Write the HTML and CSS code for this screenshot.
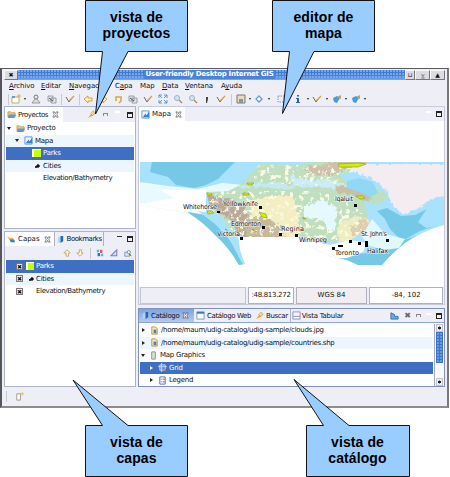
FILE: index.html
```html
<!DOCTYPE html>
<html lang="es">
<head>
<meta charset="utf-8">
<title>User-friendly Desktop Internet GIS</title>
<link rel="stylesheet" href="styles.css">
</head>
<body>
<svg class="defs" width="0" height="0">
  <symbol id="folder" viewBox="0 0 10 10"><path d="M1 2h3l1 1h4v5H1z" fill="#f4c869" stroke="#b08a40" stroke-width=".7"/><path d="M2 5h8L8 9H1z" fill="#5f96de"/></symbol>
  <symbol id="mapicon" viewBox="0 0 10 10"><path d="M1 1h8v8H1z" fill="#e8f3ff" stroke="#5e93cf"/><path d="M2 8l3-4 1 2 3-4v6z" fill="#3c80d0"/></symbol>
  <symbol id="layers" viewBox="0 0 10 10"><path d="M0 1l3 2h4v3H3z" fill="#efb642"/><path d="M3 5h5l1 3H4z" fill="#3d7ec9"/></symbol>
  <symbol id="book" viewBox="0 0 10 10"><path d="M2 3l3-2v7l-3 1z" fill="#b6d4f5"/><path d="M5 1h3v6L5 9z" fill="#2667b9"/></symbol>
  <symbol id="file" viewBox="0 0 10 10"><path d="M2 1h4l2 2v6H2z" fill="#fbe8b5" stroke="#bd8d3b"/><path d="M4 4h3v4H4z" fill="#477fc0"/></symbol>
  <symbol id="close" viewBox="0 0 8 8"><path d="M1 1h2l1 2 1-2h2L5.500 4 7 7H5L4 5 3 7H1l1.500-3z" fill="#fff" stroke="#444" stroke-width=".7"/></symbol>
  <symbol id="win" viewBox="0 0 10 10"><path d="M1 1h8v8H1z" fill="#fff" stroke="#6d95c4"/><path d="M1 1h8v2H1z" fill="#3478c9"/></symbol>
  <symbol id="table" viewBox="0 0 10 10"><path d="M1 1h8v8H1z" fill="#f4f4fb" stroke="#8a93b5"/><path d="M1 6h8" stroke="#8a93b5"/></symbol>
  <symbol id="newwin" viewBox="0 0 10 10"><path d="M1 3h7v6H1z" fill="#fff" stroke="#c2ad6c"/><path d="M1 3h3" stroke="#4d84c4" stroke-width="1.500"/><path d="M8 0v4M6 2h4" stroke="#e5b03d"/></symbol>
  <symbol id="torch" viewBox="0 0 10 10"><path d="M1 9l4-5 2 2z" fill="#e7a637"/><path d="M4 4l3-3 2 3-3 2z" fill="#f8d785" stroke="#a98a50" stroke-width=".6"/></symbol>
  <symbol id="zoomi" viewBox="0 0 10 10"><circle cx="4" cy="4" r="2.500" fill="#cfe6f7" stroke="#9fb1c6"/><path d="M6 6l3 3" stroke="#b68c52" stroke-width="1.400"/></symbol>
  <symbol id="arrow" viewBox="0 0 10 10"><path d="M1 5l4-3v2h4v3H5v2z" fill="#fff0b7" stroke="#d39b31" stroke-width=".9"/></symbol>
  <symbol id="pen" viewBox="0 0 10 10"><path d="M1 3l3 5 3-4" fill="none" stroke="#667"/><path d="M4 7l5-5" stroke="#d4a043" stroke-width="1.300"/></symbol>
  <symbol id="brush" viewBox="0 0 10 10"><path d="M1 4l4-2 3 2-3 5-3-1z" fill="#4b9bd7"/><path d="M5 3l4-2v4z" fill="#b9a264"/></symbol>
  <symbol id="disk" viewBox="0 0 10 10"><path d="M1 1h8v8H1z" fill="#e6dac8" stroke="#817764"/><path d="M3 5h4v4H3z" fill="#8794a6"/></symbol>
  <symbol id="paste" viewBox="0 0 10 10"><path d="M1 2h5v5H1zM4 4h5v5H4z" fill="#e2e5ea" stroke="#8b8f98" stroke-width=".8"/><path d="M2 4l4 3" stroke="#557"/></symbol>
  <symbol id="user" viewBox="0 0 10 10"><circle cx="5" cy="3" r="2" fill="#eee" stroke="#777"/><path d="M1 9l3-4h2l3 4z" fill="#ddd" stroke="#888" stroke-width=".8"/></symbol>
</svg>

<div class="window">
  <div class="titlebar">
    <span class="wbtn left">✖</span>
    <div class="caption"><span>User-friendly Desktop Internet GIS</span></div>
    <span class="wbtn">⊔</span><span class="wbtn wide">⩣</span><span class="wbtn wide">▲</span>
  </div>
  <nav class="menu">
    <span class="m1"><u>A</u>rchivo</span><span class="m2"><u>E</u>ditar</span><span class="m3"><u>N</u>avegación</span><span class="m4">C<u>a</u>pa</span><span class="m5">Map</span><span class="m6"><u>D</u>ata</span><span class="m7"><u>V</u>entana</span><span class="m8">A<u>y</u>uda</span>
  </nav>
  <div class="toolbar">
    <i class="sep"></i>
    <svg><use href="#newwin"/></svg><b class="dd"></b>
    <svg><use href="#user"/></svg>
    <svg><use href="#paste"/></svg>
    <i class="sep"></i>
    <svg><use href="#pen"/></svg>
    <i class="sep"></i>
    <svg><use href="#arrow"/></svg>
    <svg class="flip"><use href="#arrow"/></svg>
    <svg viewBox="0 0 10 10"><path d="M2 7V3h5v4l-2 2" fill="none" stroke="#d8a83e" stroke-width="1.600"/></svg>
    <svg><use href="#paste"/></svg>
    <svg><use href="#pen"/></svg>
    <svg viewBox="0 0 10 10"><path d="M1 1l3 3M9 1L6 4M1 9l3-3M9 9L6 6M1 4V1h3M6 1h3v3M1 6v3h3M9 6v3H6" fill="none" stroke="#4d8dcb" stroke-width=".9"/></svg>
    <svg><use href="#zoomi"/></svg>
    <svg><use href="#zoomi"/></svg>
    <svg viewBox="0 0 10 10"><path d="M4 3h2v2l-1 4H4V6z" fill="#444"/></svg>
    <svg><use href="#pen"/></svg>
    <i class="sep"></i>
    <svg><use href="#disk"/></svg><b class="dd"></b>
    <svg viewBox="0 0 10 10"><path d="M5 2l3 3-3 3-3-3z" fill="#fff" stroke="#659ed6" stroke-width="1.300"/></svg><b class="dd"></b>
    <svg viewBox="0 0 10 10"><path d="M2 2h6v6H2z" fill="none" stroke="#7e98b5" stroke-dasharray="1.500 1"/></svg>
    <svg viewBox="0 0 10 10"><path d="M4 1h2v1.500H4zM3 4h3v4h1v1H3V8h1V5H3z" fill="#2866ad"/></svg><b class="dd"></b>
    <svg><use href="#pen"/></svg><b class="dd"></b>
    <svg><use href="#brush"/></svg><b class="dd"></b>
    <svg><use href="#brush"/></svg><b class="dd"></b>
  </div>

  <div class="workbench">
    <div class="side">
      <section class="panel projects">
        <header class="tabs">
          <div class="tab on proj"><svg><use href="#folder"/></svg><span class="t-proj">Proyectos</span><svg class="x"><use href="#close"/></svg></div>
          <div class="ctl"><svg><use href="#torch"/></svg><i class="tri"></i><i class="min"></i><i class="max"></i></div>
        </header>
        <div class="tree">
          <div class="row"><i class="exp"></i><svg><use href="#folder"/></svg><span>Proyecto</span></div>
          <div class="row alt l1"><i class="exp"></i><svg><use href="#mapicon"/></svg><span>Mapa</span></div>
          <div class="row sel l2"><i class="poly"></i><span>Parks</span></div>
          <div class="row alt l2"><i class="pt"></i><span>Cities</span></div>
          <div class="row l2"><i class="blank"></i><span class="elev">Elevation/Bathymetry</span></div>
        </div>
      </section>
      <section class="panel layers">
        <header class="tabs">
          <div class="tab on"><svg><use href="#layers"/></svg><span>Capas</span><svg class="x"><use href="#close"/></svg></div>
          <div class="tab off"><svg><use href="#book"/></svg><span class="t-book">Bookmarks</span></div>
          <div class="ctl"><i class="min dark"></i><i class="max"></i></div>
        </header>
        <div class="tools">
          <svg viewBox="0 0 10 10"><path d="M1 5l4-4 4 4H7v4H4V5z" fill="#fff3d3" stroke="#b79f6c"/></svg>
          <svg viewBox="0 0 10 10"><path d="M1 5l4 4 4-4H7V1H4v4z" fill="#fff3d3" stroke="#b79f6c"/></svg>
          <i class="sep"></i>
          <svg viewBox="0 0 10 10"><path d="M1 1h3v3H1zM6 6h3v3H6z" fill="#4fbce4"/><path d="M5 1h3v4H5z" fill="#d85e62"/><path d="M2 5h3v4H2z" fill="#3d6bbf"/></svg>
          <svg viewBox="0 0 10 10"><path d="M1 8.500L8.500 1v7.500z" fill="#d7def5" stroke="#7884b8" stroke-width="1.300"/></svg>
          <svg viewBox="0 0 10 10"><path d="M1 4h6v5H1z" fill="#d7ebff" stroke="#6489b4"/><circle cx="6" cy="4" r="2" fill="#fff" stroke="#678"/><path d="M7 6l2 3" stroke="#345"/></svg>
        </div>
        <div class="tree">
          <div class="row sel"><i class="chk">✖</i><i class="poly"></i><span>Parks</span></div>
          <div class="row alt"><i class="chk">✖</i><i class="pt"></i><span>Cities</span></div>
          <div class="row"><i class="chk">✖</i><i class="blank"></i><span class="elev">Elevation/Bathymetry</span></div>
        </div>
      </section>
    </div>

    <div class="main">
      <section class="editor">
        <header class="tabs">
          <div class="tab on"><svg><use href="#mapicon"/></svg><span>Mapa</span><svg class="x"><use href="#close"/></svg></div>
          <div class="ctl"><i class="min"></i><i class="max"></i></div>
        </header>
        <svg class="map" viewBox="139 121 305 166">
          <defs>
            <clipPath id="extent"><path d="M140 162H444V225Q420 232 405 243 392 253 382 265H358L347 260 329 256 310 246 298 237H238L240 250 245 264 239 265Q228 246 215 235 203 222 190 214L175 211 140 205z"/></clipPath>
            <clipPath id="land"><path d="M206 192l22-1 12-6 12-12 8-9 36 1 20-3h52l-8 9-22 3 8 7 30 7 12 7-6 8-10 2 4 10 14 18-12 4-20-2-9 6-29 1-24-5H244l-14-8-7-11-12-8z"/></clipPath>
            <filter id="rough" x="0" y="0" width="1" height="1"><feTurbulence type="fractalNoise" baseFrequency=".22" numOctaves="2" seed="4"/><feDisplacementMap in="SourceGraphic" scale="6" xChannelSelector="R" yChannelSelector="G"/></filter>
            <filter id="speck" x="0" y="0" width="1" height="1"><feTurbulence type="fractalNoise" baseFrequency=".2" numOctaves="3" seed="9"/><feColorMatrix values="0 0 0 0 .96  0 0 0 0 .95  0 0 0 0 .76  9 0 0 0 -5"/><feComposite in2="SourceGraphic" operator="in"/></filter>
            <filter id="dark" x="0" y="0" width="1" height="1"><feTurbulence type="fractalNoise" baseFrequency=".25" numOctaves="3" seed="21"/><feColorMatrix values="0 0 0 0 .56  0 0 0 0 .5  0 0 0 0 .46  9 0 0 0 -5.200"/><feComposite in2="SourceGraphic" operator="in"/></filter>
          </defs>
          <g clip-path="url(#extent)">
            <path d="M140 162h304v104H140z" fill="#a9e2fc"/>
            <path d="M152 162h83l-9 9-8 8-12 6-12 3-18-3-8-8-18-5z" fill="#76c9e6"/>
            <path d="M140 182l28 4 30 3 24-6 22 2-20 9-18 2v20l-18 0-48-5z" fill="#e9faff"/>
            <path d="M160 190h46v25l-16-3-12 1-38-4v-5l34-6z" fill="#fff"/>
            <path d="M188 212l18 3 15 12 11 17 11 21-6 1-16-22-25-22z" fill="#74c8e5"/>
            <path d="M198 211l27 4 15 20v18l-9-12-16-17z" fill="#a9e3fb"/>
            <g clip-path="url(#land)">
              <g filter="url(#rough)">
                <path d="M190 155h210v100H190z" fill="#bfdfc0"/>
                <path d="M250 200l42-5 7 23v28h-35l-12-13z" fill="#f4efc3"/>
                <path d="M338 224l20-9 16 7 10 14-7 9-39-2z" fill="#eceebf"/>
                <path d="M349 227l14-10 10 12-5 10-15-3z" fill="#ddceb0"/>
                <path d="M200 193l29 6 15 7 6 18 21 5 14 14h-45l-8-22-17-10-15-7z" fill="#b9aa98"/>
                <path d="M246 216l16 2 13 4 16 21h-43z" fill="#c9b896"/>
                <path d="M235 188l25-1 30 3 6-3-18-5-29 1z" fill="#c5e9ef"/>
                <path d="M290 176l20 4 24 0 20 9-4 4-28-6-30-1z" fill="#c9ecf6"/>
                <path d="M305 168l34-7 27 1-5 5-17 2-12 6-24-1z" fill="#cfc1a9"/>
                <path d="M335 185l24 4 14 9-6 4-14-6-17-4z" fill="#c9bfa5"/>
              </g>
              <path d="M207 191h100l35 5 35 30 2 20-35 5-40-14h-66l-29-29z" filter="url(#speck)"/>
              <path d="M250 166l35-2 50 2 20 5-20 15-80-3z" filter="url(#speck)"/>
              <path d="M206 192l29 7 18 16 30 10 10 14h-52l-10-16-20-13zM305 165h45l-10 12-30-2zM340 186l30 4 5 10-20 0z" filter="url(#dark)"/>
            </g>
            <path d="M303 208l12-5 5-4 8 4 9 3-1 8-1 17h-8l-2-11-21-3z" fill="#e5f9ff" filter="url(#rough)"/>
            <path d="M347 181l12-3 14 4 5 11-8 4-10-5-13-4z" fill="#91d8f5"/>
            <path d="M364 200l10 4 12 22 12 12-16 1-12-13z" fill="#a9e2fc"/>
            <path d="M377 211l10-3 14 8 14-1 12-6-5 13 22-5v6l-24 8-18 10-12-12-5-10z" fill="#74c9e6"/>
            <path d="M444 198v27l-18 3-8-6 8-12z" fill="#a9e2fc"/>
            <path d="M444 227l-24 8-22 17-16 14h-34l-14-8 24-4 20-2 14-8z" fill="#75c9e6"/>
            <path d="M372 219l13 15 20 5-6 9-14 2-18-5-5-9z" fill="#e2f8ff"/>
            <path d="M346 169l20-5h80v30l-17 6-13 10-12 5-11-9-7-16-15-12z" fill="#f3edf2" filter="url(#rough)"/>
            <path d="M298 238l32 7 20-5 17 3-4 9-16 6-20 1-30-15z" fill="#fff"/>
          </g>
          <g fill="#cff000" stroke="#879b27" stroke-width=".6"><path d="M338 164l20-1 8 1-8 3h-19zM207 193h5v2h-5zM247 183h7l-2 2h-4zM243 193h6v2h-6zM207 211h5l2 2-6 1zM259 212l7 2 1 4-5-1zM356 196h7l2 2-5 1zM303 217l3 2h-3zM252 229l5 3-3-1zM225 229l3 2z"/></g>
          <g fill="#000"><path d="M217 211h3v2h-3zM259 206h3v3h-3zM262 226h3v3h-3zM240 237h3v3h-3zM279 233h3v3h-3zM295 234h3v3h-3zM354 204h3v3h-3zM332 247h3v3h-3zM338 245h5v2h-5zM349 240h3v3h-3zM358 242h3v3h-3zM365 241h3v6h-3zM386 239h3v3h-3z"/></g>
          <g class="cities">
            <text x="183" y="209" textLength="34">Whitehorse</text><text x="223" y="206" textLength="35">Yellowknife</text>
            <text x="231" y="226" textLength="30">Edmonton</text><text x="217" y="236" textLength="23">Victoria</text>
            <text x="281" y="231" textLength="23">Regina</text><text x="299" y="242" textLength="28">Winnipeg</text>
            <text x="335" y="201" textLength="18">Iqaluit</text><text x="361" y="236" textLength="26">St. John's</text>
            <text x="335" y="255" textLength="24">Toronto</text><text x="367" y="253" textLength="21">Halifax</text>
          </g>
        </svg>
        <div class="status"><span class="s0"></span><span class="s1">:48.813.272</span><span class="s2">WGS 84</span><span class="s3">-84, 102</span></div>
      </section>

      <section class="panel catalog">
        <header class="tabs">
          <div class="tab cur"><svg><use href="#book"/></svg><span class="t-cat">Catálogo</span><svg class="x"><use href="#close"/></svg></div>
          <div class="tab"><svg><use href="#win"/></svg><span class="t-web">Catálogo Web</span></div>
          <div class="tab"><svg><use href="#torch"/></svg><span class="t-web">Buscar</span></div>
          <div class="tab last"><svg><use href="#table"/></svg><span class="t-vis">Vista Tabular</span></div>
          <div class="ctl"><svg viewBox="0 0 10 10"><path d="M1 2l4 2v2h4v3H1z" fill="#72a9de" stroke="#326eaf"/></svg><b class="cross">✖</b><i class="tri"></i><i class="min"></i><i class="max"></i></div>
        </header>
        <div class="catbody">
          <div class="tree">
            <div class="row"><i class="col"></i><svg><use href="#file"/></svg><span class="path">/home/maum/udig-catalog/udig-sample/clouds.jpg</span></div>
            <div class="row alt"><i class="col"></i><svg><use href="#file"/></svg><span class="path">/home/maum/udig-catalog/udig-sample/countries.shp</span></div>
            <div class="row"><i class="exp"></i><svg viewBox="0 0 10 10"><path d="M3 1h4v8H3z" fill="#d4e8d4" stroke="#888c7c"/></svg><span>Map Graphics</span></div>
            <div class="row sel sub"><i class="col"></i><svg viewBox="0 0 10 10"><path d="M2 2h6v6H2zM0 4h10M4 0v10" fill="#5b8dd5" stroke="#c2d7f5"/><path d="M7 7h2v2H7z" fill="#e05464"/></svg><span>Grid</span></div>
            <div class="row sub"><i class="col"></i><svg viewBox="0 0 10 10"><path d="M2 1h6v8H2z" fill="#fff" stroke="#5b63a5"/><path d="M3 3h2v1H3zM3 6h2v1H3z" fill="#c55"/><path d="M5.500 3h2v1h-2zM5.500 6h2v1h-2z" fill="#346"/></svg><span>Legend</span></div>
          </div>
          <div class="scroll"><i class="sb up"></i><i class="thumb"></i><i class="gap"></i><i class="sb down"></i></div>
        </div>
      </section>
    </div>
  </div>
  <footer><i class="sep"></i><svg viewBox="0 0 10 10"><path d="M2 2h4v7H2z" fill="#fff" stroke="#9b997d"/><path d="M8 0v4M6 2h4" stroke="#e5bd54"/></svg></footer>
</div>

<svg class="tails" viewBox="0 0 450 477">
  <path d="M85.500 .5H187.500V51.500H128L95.500 114 102.500 51.500H85.500z"/>
  <path d="M272.500 .5H374.500V51.500H314L282.500 113.500 289.500 51.500H272.500z"/>
  <path d="M85.500 425.500H102.500L73 380 128 425.500H187.500V476.500H85.500z"/>
  <path d="M306.500 425.500H323.500L294 379.500 349 425.500H409.500V476.500H306.500z"/>
</svg>
<div class="callout c1">vista de<br>proyectos</div>
<div class="callout c2">editor de<br>mapa</div>
<div class="callout c3">vista de<br>capas</div>
<div class="callout c4">vista de<br>catálogo</div>
</body>
</html>
```
FILE: styles.css
```css
* { box-sizing: border-box; }
body { margin: 0; width: 450px; height: 477px; padding-top: 68px; background: #fff; overflow: hidden; position: relative; font: 7px/12px "DejaVu Sans", sans-serif; color: #111; }
i, b { font-style: normal; }
span { white-space: nowrap; }
svg { display: block; flex: none; }
.defs { position: absolute; }
.window { width: 449px; height: 340px; background: #eeeef7; border: 1px solid #5b5b62; border-left: 2px solid #55555c; border-right: 2px solid #77777c; border-bottom: 2px solid #8c8c8c; padding: 1px 2px 0; display: flex; flex-direction: column; }
.titlebar { height: 10px; display: flex; flex: none; }
.caption { flex: 1; background: radial-gradient(circle at 1px 1px, #76a8ee 0.7px, transparent 1px) 0 0/3px 3px, linear-gradient(#3d78d0, #3f7eda 50%, #72a3ea); text-align: center; font: bold 7px/9px "DejaVu Sans", sans-serif; color: #fff; letter-spacing: -0.27px; padding-right: 4px; }
.caption span { background: #4b83db; display: inline-block; height: 9px; padding: 0 2px; }
.wbtn { width: 10px; background: #dcdce0; border: 1px solid #f8f8f8; border-right-color: #777; border-bottom-color: #777; color: #111; font-size: 6px; line-height: 8px; text-align: center; }
.wbtn.wide { width: 15px; }
.wbtn.left { width: 14px; }
.menu { height: 12px; flex: none; padding: 1px 0 0 5px; display: grid; grid-template-columns: 32px 28px 46px 25px 22px 23px 36px 30px; font-size: 7px; line-height: 11px; letter-spacing: -0.1px; }
.menu u { text-underline-offset: 1px; text-decoration-thickness: 1px; }
.toolbar { height: 14px; flex: none; align-items: center; justify-items: center; display: grid; grid-template-columns: 4px 12px 6px 16px 15px 4px 14px 4px 14px 16px 15px 14px 15px 15px 15px 15px 14px 14px 7px 11px 7px 12px 7px 17px 17px 4px 14px 6px 13px 6px 13px 6px; padding-left: 2px; }
.toolbar svg, .tools svg { width: 10px; height: 10px; }
.flip { transform: scaleX(-1); }
.sep { width: 1px; height: 11px; background: #c7c7d2; }
.dd { border: 1.5px solid transparent; border-top: 2px solid #222; border-bottom: 0; }
.workbench { display: flex; gap: 2px; height: 281px; flex: none; }
.side { width: 132px; display: flex; flex-direction: column; gap: 2px; }
.main { flex: 1; min-width: 0; display: flex; flex-direction: column; gap: 3px; }
.panel, .editor { border: 1px solid #aeb3cc; background: #fff; display: flex; flex-direction: column; overflow: hidden; }
.projects { height: 123px; }
.layers { height: 156px; }
.editor { height: 199px; border-color: #c9cad9; }
.catalog { height: 79px; border: 1px solid #7e91bf; }
.tabs { height: 14px; flex: none; background: #eeeef7; display: flex; }
.projects .tabs { height: 15px; }
.tab { display: flex; align-items: center; gap: 2px; padding: 0 3px 0 2px; }
.tab svg { width: 9px; height: 9px; }
.tab .x { width: 7px; height: 7px; margin-left: 2px; }
.tab.on { background: #fff; }
.tab.off { border: 1px solid #afb1c7; border-width: 0 1px; padding: 0 1px; }
.proj { width: 58px; }
.t-proj, .t-book { letter-spacing: -0.45px; }
.ctl { margin-left: auto; display: flex; align-items: center; gap: 5px; padding-right: 2px; }
.ctl svg { width: 9px; height: 9px; }
.projects .ctl { gap: 7px; }
.tri { width: 5px; height: 3px; border: 1px solid #888; border-width: 1px 1px 0; }
.min { width: 5px; height: 2px; background: #fff; align-self: flex-start; margin-top: 4px; }
.min.dark { background: #eee; border-top: 1px solid #333; }
.max { width: 6px; height: 6px; border: 1px solid #222; border-top-width: 2px; }
.tree { flex: 1; min-width: 0; padding: 0 1px; }
.row { height: 12.5px; display: flex; align-items: center; gap: 2px; padding-left: 1px; letter-spacing: -0.25px; }
.row svg { width: 9px; height: 9px; }
.alt { background: #edf6ff; }
.sel { background: #3e6fc3; color: #fff; }
.l1 { padding-left: 9px; }
.l2 { padding-left: 26px; }
.exp { border: 2.5px solid transparent; border-top: 3px solid #222; border-bottom: 0; margin-right: 2px; }
.projects .exp { margin-right: 3px; }
.col { border: 2.5px solid transparent; border-left: 3px solid #222; border-right: 0; margin: 0 3px 0 1px; }
.sel .col { border-left-color: #fff; }
.poly { width: 8px; height: 8px; background: #ccff00; border: 1px solid #fff; border-width: 1px 0 0 2px; }
.projects .poly, .projects .pt, .projects .blank { width: 9px; }
.pt { width: 8px; height: 7px; background: radial-gradient(circle at 6px 4px, #111 1.4px, transparent 1.9px), radial-gradient(circle at 4px 5px, #333 1px, transparent 1.4px); }
.blank { width: 8px; }
.elev { letter-spacing: -0.35px; }
.tools { height: 14px; flex: none; background: #eeeef7; padding-left: 55px; display: grid; grid-template-columns: 13px 14px 6px 14px 14px 14px; align-items: center; justify-items: center; }
.tools svg { width: 8px; height: 8px; }
.layers .row { padding-left: 10px; }
.chk { width: 7px; height: 7px; background: #eee; border: 1px solid #777; color: #111; font-size: 6px; line-height: 5px; text-align: center; letter-spacing: 0; margin-right: 1px; }
.map { width: 305px; height: 166px; background: #fff; }
.cities { font: 6.5px "DejaVu Sans", sans-serif; fill: #111; stroke: #fff; stroke-width: 1.2px; stroke-opacity: .75; paint-order: stroke; }
.status { height: 17px; flex: none; background: #eeeef7; display: grid; grid-template-columns: 106px 46px 71px 1fr; gap: 2px; padding: 0 1px; line-height: 15px; text-align: center; }
.status span { border: 1px solid #b1b1bd; background: #fff; overflow: hidden; }
.status .s0 { background: #eeeef7; border-color: #c5c5d0; }
.status .s1 { letter-spacing: -0.3px; }
.status .s2 { background: #f2edf1; }
.catalog .tab { padding: 0 2px; }
.catalog .cur { background: linear-gradient(#7ca4df, #b6c9ec); width: 55px; gap: 1px; }
.catalog .tab.last { border-left: 1px solid #b0b2c7; padding-left: 1px; gap: 1px; }
.catalog .tabs { border-bottom: 1px solid #8ba4d6; }
.t-cat { letter-spacing: -0.35px; }
.t-web { letter-spacing: -0.38px; }
.t-vis { letter-spacing: -0.25px; }
.cross { font-size: 8px; color: #666; }
.catbody { flex: 1; display: flex; min-height: 0; padding-top: 1px; }
.path { letter-spacing: -0.3px; }
.sub { padding-left: 9px; }
.scroll { width: 10px; border-left: 1px solid #a5adc4; padding: 0 1px; display: flex; flex-direction: column; background: #fafafd; }
.sb { height: 8px; border: 1px solid #c4c4cc; background: radial-gradient(circle, #222 1.3px, #eee 1.7px); }
.thumb { height: 31px; background: radial-gradient(circle at 1px 1px, #86b0ee .6px, transparent .9px) 1px 1px/3px 3px, #3f72ca; }
.gap { flex: 1; }
footer { flex: 1; display: flex; gap: 8px; align-items: center; padding-left: 2px; }
footer svg { width: 9px; height: 9px; }
.tails { position: absolute; left: 0; top: 0; width: 450px; height: 477px; fill: #99ccff; stroke: #111; stroke-width: 1; }
.callout { position: absolute; width: 103px; text-align: center; font: bold 14px/15.5px "Liberation Sans", Arial, sans-serif; color: #000; letter-spacing: .1px; }
.c1 { left: 85px; top: 10px; }
.c2 { left: 272px; top: 10px; }
.c3 { left: 85px; top: 435px; }
.c4 { left: 306px; top: 435px; }
```
